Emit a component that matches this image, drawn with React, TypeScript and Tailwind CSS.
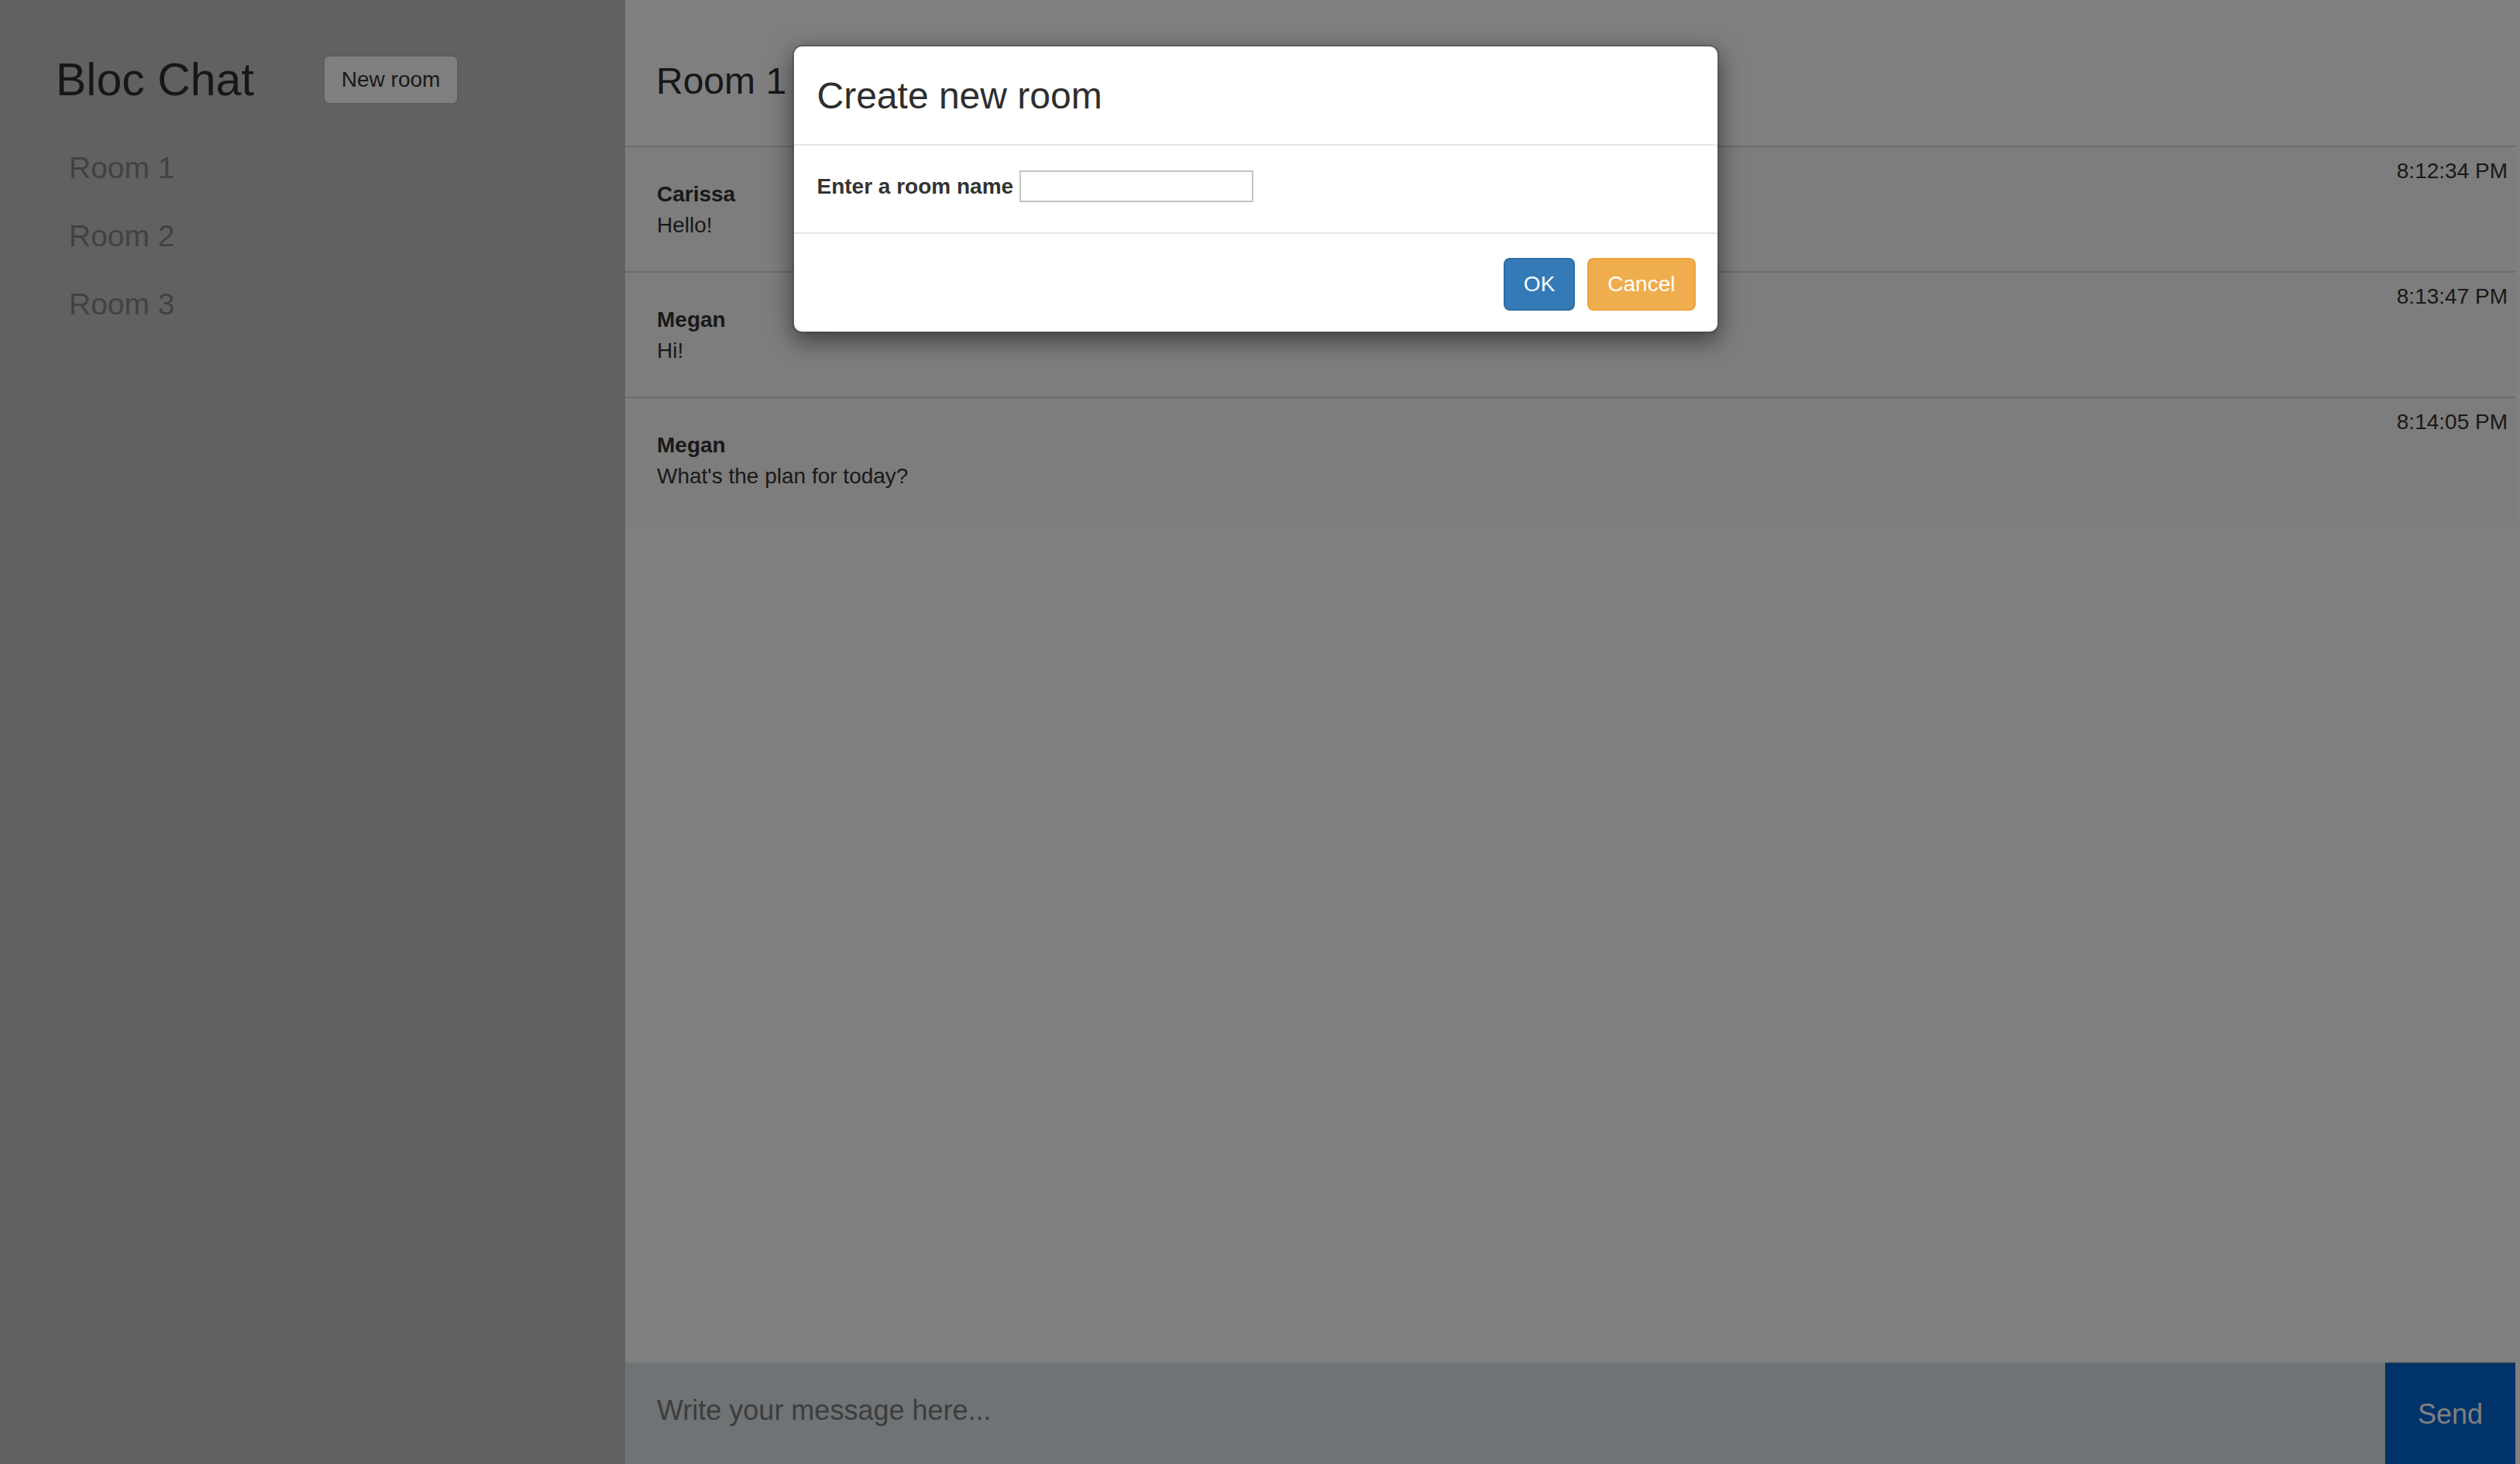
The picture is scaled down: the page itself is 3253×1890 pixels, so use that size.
import React from "react";

const messages = [
  { name: "Carissa", text: "Hello!", time: "8:12:34 PM" },
  { name: "Megan", text: "Hi!", time: "8:13:47 PM" },
  { name: "Megan", text: "What's the plan for today?", time: "8:14:05 PM" },
];

export default function App() {
  return (
    <div className="relative flex h-[1890px] w-full overflow-hidden bg-white pr-[6px] font-['Liberation_Sans',Arial,sans-serif] text-[#333]">
      {/* Sidebar */}
      <aside className="h-full w-[807px] shrink-0 bg-[#c2c2c2] pl-[72px] pt-[71px]">
        <div className="flex h-[64px] items-center">
          <h2 className="text-[59px] font-normal leading-none text-[#2e2e2e]">Bloc Chat</h2>
          <button className="ml-[89px] h-[64px] rounded-[8px] border-2 border-[#bbbbbb] bg-white px-[22px] text-[28px] text-[#333]">
            New room
          </button>
        </div>
        <ul className="mt-[38px] pl-[17px]">
          {["Room 1", "Room 2", "Room 3"].map((r) => (
            <li key={r} className="text-[39px] leading-[88px] text-[#858585]">
              {r}
            </li>
          ))}
        </ul>
      </aside>

      {/* Main */}
      <main className="flex h-full flex-1 flex-col bg-white">
        <header className="h-[190px] border-b-2 border-[#d6d6d6] pl-[40px] pt-[78px]">
          <h3 className="text-[48px] font-normal leading-[53px] text-[#2e2e2e]">Room 1</h3>
        </header>
        <div>
          {messages.map((m, i) => (
            <div
              key={i}
              className={
                i < messages.length - 1
                  ? "flex h-[162px] justify-between border-b-2 border-[#d6d6d6] bg-[#fafafa] pl-[41px] pr-[10px]"
                  : "flex h-[160px] justify-between bg-[#fafafa] pl-[41px] pr-[10px]"
              }
            >
              <div className="pt-[41px] text-[28px] leading-[40px]">
                <div className="font-bold">{m.name}</div>
                <div>{m.text}</div>
              </div>
              <div className="pt-[11px] text-[28px] leading-[40px]">{m.time}</div>
            </div>
          ))}
        </div>
        <div className="flex-1" />
        <div className="flex h-[131px]">
          <input
            className="h-full flex-1 bg-[#dee6ea] pb-[8px] pl-[41px] text-[36px] outline-none placeholder:text-[#7a7a7a]"
            placeholder="Write your message here..."
          />
          <button className="h-full w-[168px] border-t-2 border-[#2a6fb8] bg-[#0066d2] text-[36px] text-white">
            Send
          </button>
        </div>
      </main>

      {/* Modal backdrop */}
      <div className="absolute inset-0 z-10 flex flex-col items-center bg-black/50 pr-[12px] pt-[58px]">
        <div className="w-[1196px] rounded-[12px] border-2 border-black/20 bg-white bg-clip-padding shadow-[0_10px_30px_rgba(0,0,0,0.5)]">
          <div className="border-b-2 border-[#e5e5e5] px-[30px] pb-[28px] pt-[30px]">
            <h3 className="text-[48px] font-normal leading-[68px] text-[#2e2e2e]">Create new room</h3>
          </div>
          <div className="flex items-start gap-[8px] px-[30px] pb-[39px] pt-[32px]">
            <label className="text-[28px] font-bold leading-[41px] text-[#333]">Enter a room name</label>
            <input className="h-[41px] w-[302px] border-2 border-[#c4c4c4] bg-white outline-none" />
          </div>
          <div className="flex justify-end gap-[16px] border-t-2 border-[#e5e5e5] pb-[27px] pl-[30px] pr-[28px] pt-[31px]">
            <button className="h-[68px] rounded-[8px] border-2 border-[#2e6da4] bg-[#337ab7] px-[24px] text-[28px] text-white">
              OK
            </button>
            <button className="h-[68px] rounded-[8px] border-2 border-[#eea236] bg-[#f0ad4e] px-[24px] text-[28px] text-white">
              Cancel
            </button>
          </div>
        </div>
      </div>
    </div>
  );
}
